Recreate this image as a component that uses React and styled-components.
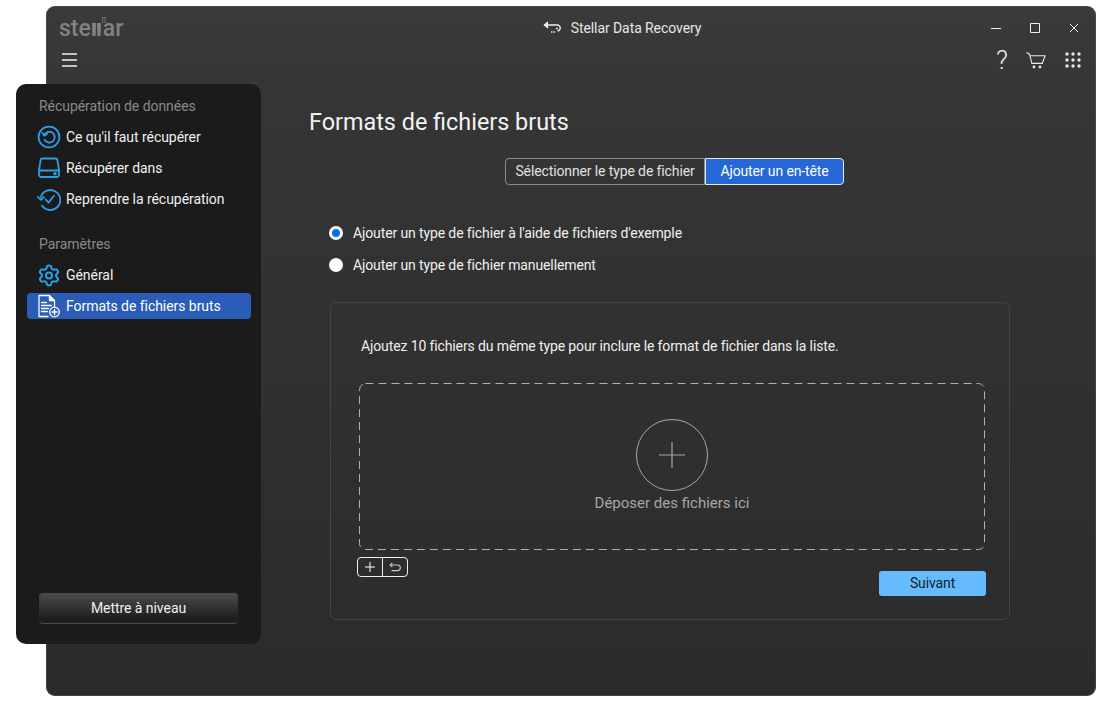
import React from "react";
import styled, { createGlobalStyle } from "styled-components";
import { Settings } from "lucide-react";

const Global = createGlobalStyle`
  html, body { margin: 0; padding: 0; background: #fff; }
  body { font-family: Roboto, "Liberation Sans", sans-serif; }
`;
const Page = styled.div`
  width: 1107px; height: 710px; box-sizing: border-box; padding: 6px 11px 14px 46px; overflow: hidden;
`;
const Win = styled.div`
  position: relative; width: 1050px; height: 690px; box-sizing: border-box;
  border-radius: 9px; display: flex; flex-direction: column;
  background: linear-gradient(180deg, #3a3a3a 0%, #353535 15%, #2b2b2b 100%);
  box-shadow: inset 0 0 0 1px rgba(90,90,90,.45);
`;
const TitleBar = styled.div`
  height: 40px; display: grid; grid-template-columns: 1fr auto 1fr; align-items: center; padding: 4px 0 0 13px; box-sizing: border-box;
`;
const Logo = styled.div`
  display: flex; align-items: baseline; color: #828282; font-size: 23px; font-weight: 500; line-height: 24px; margin-top: 2px;
`;
const LogoMark = styled.svg`
  overflow: visible; margin: 0 1px 0 1px; flex: none;
`;
const TitleCenter = styled.div`
  display: flex; align-items: center; gap: 9px; color: #e6e6e6; font-size: 14px; margin-left: 89px; letter-spacing: -.08px;
`;
const WinControls = styled.div`
  justify-self: end; display: flex; align-items: center; gap: 29px; padding-right: 17px; color: #eee;
`;
const Toolbar = styled.div`
  height: 28px; display: flex; justify-content: space-between; align-items: center; padding: 0 15px 0 16px;
`;
const ToolRight = styled.div`
  display: flex; align-items: center; gap: 18px;
`;
const Help = styled.span`
  color: #eee; font-size: 26px; font-weight: 300; line-height: 28px; width: 12px; text-align: center;
`;
const Main = styled.div`
  flex: 1; padding: 34px 0 0 263px; display: flex; flex-direction: column; letter-spacing: -.12px;
`;
const Title = styled.h1`
  margin: 0; font-size: 23.4px; font-weight: 400; color: #f2f2f2; line-height: 28px; letter-spacing: 0;
`;
const Tabs = styled.div`
  display: flex; margin: 22px 0 0 196px;
`;
const Tab = styled.div`
  box-sizing: border-box; height: 27px; display: flex; align-items: center; justify-content: center; font-size: 14px; padding-bottom: 1px;
  width: ${p => (p.$active ? "139px" : "200px")};
  color: ${p => (p.$active ? "#fff" : "#e0e0e0")};
  background: ${p => (p.$active ? "#2468d8" : "transparent")};
  border: 1px solid ${p => (p.$active ? "#e8e8e8" : "#8c8c8c")};
  border-radius: ${p => (p.$active ? "0 4px 4px 0" : "4px 0 0 4px")};
`;
const Radios = styled.div`
  display: flex; flex-direction: column; gap: 12px; margin: 38px 0 0 20px;
`;
const RadioRow = styled.label`
  display: flex; align-items: center; gap: 10px; color: #f0f0f0; font-size: 14px; line-height: 20px;
`;
const RadioDot = styled.span`
  width: 14px; height: 14px; border-radius: 50%; background: #fff; display: flex; align-items: center; justify-content: center;
  &::after { content: ""; width: 8px; height: 8px; border-radius: 50%; background: ${p => (p.$on ? "#0a6cf0" : "#fff")}; }
`;
const Card = styled.div`
  box-sizing: border-box; width: 680px; height: 318px; margin: 27px 0 0 21px; padding: 33px 24px 0 28px;
  border: 1px solid #454545; border-radius: 7px;
`;
const CardText = styled.p`
  margin: 0 0 0 2px; font-size: 14px; line-height: 20px; color: #efefef;
`;
const Drop = styled.div`
  position: relative; box-sizing: border-box; width: 626px; height: 167px; margin-top: 27px; padding-top: 36px;
  display: flex; flex-direction: column; align-items: center;
`;
const DashFrame = styled.svg`
  position: absolute; left: 0; top: 0;
`;
const Circle = styled.div`
  box-sizing: border-box; width: 72px; height: 72px; border: 1.5px solid #a8a8a8; border-radius: 50%;
  display: flex; align-items: center; justify-content: center;
`;
const DropText = styled.div`
  margin-top: 2px; color: #a6a6a6; font-size: 15px; line-height: 20px; letter-spacing: 0;
`;
const Bottom = styled.div`
  display: flex; justify-content: space-between; align-items: flex-start; margin: 7px 0 0 -2px; width: 629px;
`;
const MiniGroup = styled.div`
  box-sizing: border-box; display: flex; width: 51px; height: 20px; border: 1px solid #eee; border-radius: 4px;
`;
const MiniBtn = styled.div`
  flex: 1; display: flex; align-items: center; justify-content: center;
  & + & { border-left: 1px solid #eee; }
`;
const Next = styled.div`
  box-sizing: border-box; margin-top: 14px; width: 107px; height: 25px; padding-bottom: 2px; border-radius: 3px; background: #66bbff; color: #10202c;
  display: flex; align-items: center; justify-content: center; font-size: 14px;
`;
const Sidebar = styled.aside`
  position: absolute; left: -30px; top: 78px; width: 245px; height: 560px; box-sizing: border-box;
  background: #1b1b1b; border-radius: 10px; padding: 12px 10px 20px 11px; display: flex; flex-direction: column; letter-spacing: -.05px;
`;
const Heading = styled.div`
  font-size: 14px; line-height: 20px; color: #8a8a8a; margin: 0 0 8px 12px;
  & ~ & { margin-top: 17px; }
`;
const NavItem = styled.div`
  box-sizing: border-box; height: 26px; margin-bottom: 5px; display: flex; align-items: center; gap: 5px; padding-left: 10px;
  font-size: 14px; color: ${p => (p.$active ? "#fff" : "#f0f0f0")};
  background: ${p => (p.$active ? "#2a5cb8" : "transparent")}; border-radius: 4px;
`;
const IconSlot = styled.span`
  width: 24px; height: 24px; display: flex; align-items: center; justify-content: center; flex: none;
`;
const Upgrade = styled.div`
  margin: auto 13px 0 12px; height: 31px; box-sizing: border-box; border-radius: 4px; color: #f0f0f0; font-size: 14px;
  display: flex; align-items: center; justify-content: center;
  background: linear-gradient(180deg, #4c4c4c 0%, #1e1e1e 85%); border-bottom: 1px solid #4a4a4a;
`;

const BLUE = "#2a9fe8";
const B = { fill: "none", stroke: BLUE, strokeWidth: 1.8, strokeLinecap: "round", strokeLinejoin: "round" };

const IconRecover = () => (
  <svg width="24" height="24" viewBox="0 0 24 24" {...B}>
    <circle cx="12" cy="12" r="10.4" />
    <path d="M7.2 10.4a5.4 5.4 0 1 1 .4 4.4" /><path d="M5.4 8l1.8 2.6L10 9" />
  </svg>
);
const IconDrive = () => (
  <svg width="24" height="24" viewBox="0 0 24 24" {...B}>
    <path d="M5.6 2.5h12.8a2 2 0 0 1 2 1.7L22 14.2v4.6a2.2 2.2 0 0 1-2.2 2.2H4.2A2.2 2.2 0 0 1 2 18.8v-4.6L3.6 4.2a2 2 0 0 1 2-1.7z" />
    <path d="M2 14.5h20" /><circle cx="18" cy="17.8" r=".9" fill={BLUE} />
  </svg>
);
const IconResume = () => (
  <svg width="24" height="24" viewBox="0 0 24 24" {...B}>
    <path d="M3.8 10A10 10 0 1 1 5 18.6" /><path d="M.8 9.8l3 3 3-2.8" /><path d="M8.6 12.4l3 3.2 5.400-6.800" />
  </svg>
);
const IconRaw = () => (
  <svg width="24" height="24" viewBox="0 0 24 24" fill="none" stroke="#fff" strokeWidth="1.3" strokeLinejoin="round" strokeLinecap="round">
    <path d="M11 22.5H2V1.5h10.5l5 5v6.5" /><path d="M12.5 1.500v5h5" fill="#fff" />
    <path d="M4.5 8.5h5M4.5 11.5h10M4.5 14.5h7M4.5 17.5h6" />
    <circle cx="17.5" cy="18" r="4.8" /><path d="M15 18h5M17.5 15.5v5" strokeWidth="1.5" />
  </svg>
);
const IconBack = () => (
  <svg width="19" height="14" viewBox="0 0 19 14" fill="none" stroke="#eee" strokeWidth="1.4">
    <path d="M1.5 4h13a3 3 0 0 1 2.7 3.6 3 3 0 0 1-2.7 2.4" /><path d="M5 1L1.5 4 5 7" fill="#eee" />
    <circle cx="14" cy="7.6" r="1" fill="#eee" stroke="none" /><path d="M8 11h4" strokeDasharray="1.5 1" />
  </svg>
);
const IconMenu = () => (
  <svg width="15" height="14" viewBox="0 0 15 14" stroke="#f0f0f0" strokeWidth="1.3"><path d="M0 1h15M0 7h15M0 13h15" /></svg>
);
const IconCart = () => (
  <svg width="21" height="17" viewBox="0 0 21 17" fill="none" stroke="#e8e8e8" strokeWidth="1.1">
    <path d="M.5.6l3 1.6 2.4 9.2h10.400l2.800-7.600H4.200" /><circle cx="8" cy="15" r=".9" fill="#e8e8e8" /><circle cx="14" cy="15" r=".9" fill="#e8e8e8" />
  </svg>
);
const IconGrid = () => (
  <svg width="16" height="16" viewBox="0 0 16 16" fill="#e8e8e8">
    {[2, 8, 14].flatMap(y => [2, 8, 14].map(x => <circle key={x + "-" + y} cx={x} cy={y} r="1.7" />))}
  </svg>
);
const IconPlus = ({ size, color, sw }) => (
  <svg width={size} height={size} viewBox="0 0 24 24" stroke={color} strokeWidth={sw}><path d="M12 0v24M0 12h24" /></svg>
);
const IconUndo = () => (
  <svg width="12" height="10" viewBox="0 0 12 10" fill="none" stroke="#ccc" strokeWidth="1.1">
    <path d="M1 3h7.5a2.5 2.5 0 0 1 0 5.6H2.5" /><path d="M3.4 .8L1 3l2.4 2.2" />
  </svg>
);

export default function App() {
  return (
    <Page>
      <Global />
      <Win>
        <TitleBar>
          <Logo>
            ste
            <LogoMark width="10" height="13" viewBox="0 0 10 13" fill="#828282">
              <path d="M0 0h4l-.4 13H.4zM5 0h4l-.4 13H5.4z" />
              {[0, 2.2, 4.4].flatMap(y => [10, 12.4].map(x => <rect key={x + "-" + y} x={x} y={y - 6} width="1.4" height="1.4" />))}
            </LogoMark>
            ar
          </Logo>
          <TitleCenter><IconBack />Stellar Data Recovery</TitleCenter>
          <WinControls>
            <svg width="10" height="10" viewBox="0 0 10 10" stroke="#eee"><path d="M0 5.5h10" /></svg>
            <svg width="10" height="10" viewBox="0 0 10 10" fill="none" stroke="#eee"><path d="M.5.5h9v9h-9z" /></svg>
            <svg width="10" height="10" viewBox="0 0 10 10" stroke="#eee"><path d="M1 1l8 8M9 1l-8 8" /></svg>
          </WinControls>
        </TitleBar>
        <Toolbar>
          <IconMenu />
          <ToolRight><Help>?</Help><IconCart /><IconGrid /></ToolRight>
        </Toolbar>
        <Main>
          <Title>Formats de fichiers bruts</Title>
          <Tabs>
            <Tab>Sélectionner le type de fichier</Tab>
            <Tab $active>Ajouter un en-tête</Tab>
          </Tabs>
          <Radios>
            <RadioRow><RadioDot $on />Ajouter un type de fichier à l'aide de fichiers d'exemple</RadioRow>
            <RadioRow><RadioDot />Ajouter un type de fichier manuellement</RadioRow>
          </Radios>
          <Card>
            <CardText>Ajoutez 10 fichiers du même type pour inclure le format de fichier dans la liste.</CardText>
            <Drop>
              <DashFrame width="626" height="167" fill="none" stroke="#b0b0b0">
                <rect x=".5" y=".5" width="625" height="166" rx="6" strokeDasharray="8 5" />
              </DashFrame>
              <Circle><IconPlus size={26} color="#a8a8a8" sw={1.1} /></Circle>
              <DropText>Déposer des fichiers ici</DropText>
            </Drop>
            <Bottom>
              <MiniGroup>
                <MiniBtn><IconPlus size={10} color="#fff" sw={2.4} /></MiniBtn>
                <MiniBtn><IconUndo /></MiniBtn>
              </MiniGroup>
              <Next>Suivant</Next>
            </Bottom>
          </Card>
        </Main>
        <Sidebar>
          <Heading>Récupération de données</Heading>
          <NavItem><IconSlot><IconRecover /></IconSlot>Ce qu'il faut récupérer</NavItem>
          <NavItem><IconSlot><IconDrive /></IconSlot>Récupérer dans</NavItem>
          <NavItem><IconSlot><IconResume /></IconSlot>Reprendre la récupération</NavItem>
          <Heading>Paramètres</Heading>
          <NavItem><IconSlot><Settings size={25} color={BLUE} strokeWidth={2} /></IconSlot>Général</NavItem>
          <NavItem $active><IconSlot><IconRaw /></IconSlot>Formats de fichiers bruts</NavItem>
          <Upgrade>Mettre à niveau</Upgrade>
        </Sidebar>
      </Win>
    </Page>
  );
}
